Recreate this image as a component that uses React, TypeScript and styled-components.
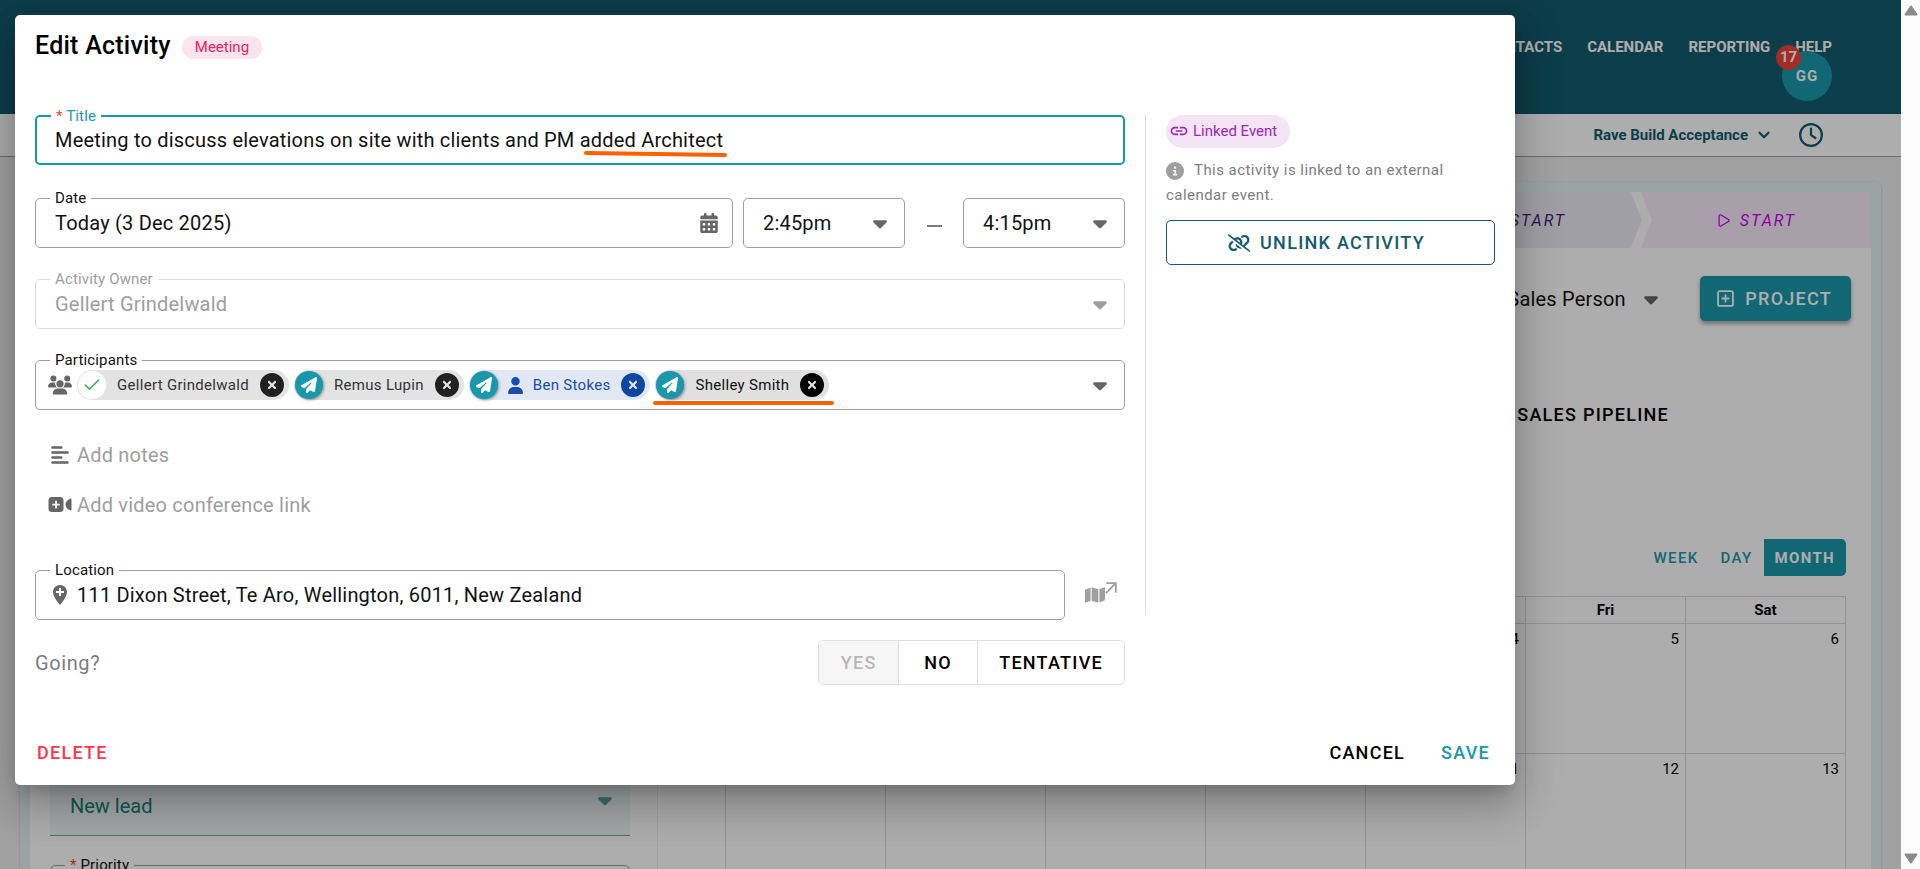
import React from "react";
import styled, { createGlobalStyle, css } from "styled-components";
import {
  FaAlignLeft,
  FaCalendarDays,
  FaCaretDown,
  FaCircleInfo,
  FaCircleXmark,
  FaLinkSlash,
  FaMap,
  FaPaperPlane,
  FaRegClock,
  FaRegSquarePlus,
  FaUser,
  FaUsers,
} from "react-icons/fa6";
import { MdAddLocation, MdArrowOutward, MdLink } from "react-icons/md";
import { Check, ChevronDown, Play } from "lucide-react";

const colour = {
  brand: "#135b6d",
  teal: "#1a98ab",
  ink: "#111111",
  icon: "#666666",
  muted: "#9e9e9e",
  outline: "#9e9e9e",
  faint: "#dddddd",
  marker: "#ff6100",
};

const GlobalStyle = createGlobalStyle`
  *, *::before, *::after { box-sizing: border-box; }
  body { margin: 0; overflow: hidden; font-family: Roboto, "Liberation Sans", sans-serif; }
  button, input, select { font: inherit; letter-spacing: inherit; color: inherit; }
  h1, h2, p { margin: 0; }
`;

/* ---------- shared parts ---------- */

const plainButton = css`
  display: inline-flex;
  align-items: center;
  justify-content: center;
  padding: 0;
  border: 0;
  background: none;
  cursor: pointer;
`;

const actionText = css`
  font-size: 18px;
  font-weight: 500;
  letter-spacing: 0.07em;
  white-space: nowrap;
`;

const IconButton = styled.button`
  ${plainButton}
  color: ${colour.icon};
`;

const Select = styled.select`
  flex: 1;
  min-width: 0;
  padding: 0;
  border: 0;
  outline: 0;
  background: none;
  appearance: none;
  opacity: 1;
`;

/* ---------- page frame ---------- */

const Frame = styled.div`
  display: flex;
  height: 100vh;
  overflow: hidden;
`;

const Viewport = styled.div`
  position: relative;
  flex: 1;
  min-width: 0;
  overflow: hidden;
  background: #eeeeee;
`;

const ScrollTrack = styled.div`
  display: flex;
  flex-direction: column;
  align-items: center;
  justify-content: space-between;
  width: 19px;
  padding: 5px 0;
  background: #fdfdfd;
`;

const TopBar = styled.header`
  display: flex;
  flex-direction: column;
  align-items: flex-end;
  height: 114px;
  padding: 38px 69px 0 20px;
  background: ${colour.brand};
`;

const Nav = styled.nav`
  display: flex;
  gap: 25px;
`;

const NavLink = styled.a`
  color: #ffffff;
  font-size: 15px;
  font-weight: 700;
  line-height: 18px;
  text-decoration: none;
`;

const Avatar = styled.button`
  ${plainButton}
  position: relative;
  width: 50px;
  height: 50px;
  margin-top: -5px;
  border-radius: 50%;
  background: ${colour.teal};
  color: #ffffff;
  font-size: 15px;
  font-weight: 700;
  letter-spacing: 1px;
`;

const Badge = styled.span`
  position: absolute;
  top: -6px;
  left: -6px;
  width: 25px;
  border-radius: 50%;
  background: #f04138;
  font-size: 15px;
  line-height: 25px;
  letter-spacing: 0;
`;

const SubBar = styled.div`
  display: flex;
  align-items: center;
  justify-content: flex-end;
  gap: 26px;
  height: 43px;
  padding: 0 78px 0 20px;
  border-bottom: 1px solid #a3a3a3;
  background: #ffffff;
  color: ${colour.brand};
`;

const CompanyButton = styled.button`
  ${plainButton}
  gap: 7px;
  font-size: 15px;
  font-weight: 700;
`;

const Panel = styled.main`
  margin: 25px 20px 0;
  border: 10px solid #e4f3f0;
  border-radius: 6px;
  background: #ffffff;
  box-shadow: 0 1px 3px rgba(0, 0, 0, 0.2);
`;

const Stages = styled.div`
  display: flex;
`;

const Stage = styled.button<{ $last?: boolean }>`
  ${plainButton}
  flex: 1 1 ${(p) => (p.$last ? 0 : 10)}px;
  gap: 9px;
  height: 56px;
  margin-right: ${(p) => (p.$last ? 0 : -10)}px;
  padding-right: ${(p) => (p.$last ? 0 : 10)}px;
  background: ${(p) => (p.$last ? "#faeafd" : "#ebeaf4")};
  color: ${(p) => (p.$last ? "#c800f0" : "#4b1a86")};
  font-size: 16px;
  font-style: italic;
  letter-spacing: 2px;
  clip-path: ${(p) =>
    p.$last
      ? "polygon(0 0, 100% 0, 100% 100%, 0 100%, 11px 50%)"
      : "polygon(0 0, calc(100% - 20px) 0, calc(100% - 9px) 50%, calc(100% - 20px) 100%, 0 100%, 11px 50%)"};
`;

const Columns = styled.div`
  display: flex;
  height: 700px;
`;

const LeadColumn = styled.section`
  flex: 0 1 628px;
  padding: 525px 27px 0 20px;
  border-right: 1px solid #eeeeee;
`;

const FilledSelect = styled.label`
  display: flex;
  align-items: center;
  height: 63px;
  margin-bottom: 29px;
  padding: 3px 14px 0 20px;
  border-bottom: 1px solid #5fa8a2;
  background: #f0f7f7;
  color: #12847c;
  font-size: 20px;
  svg {
    margin-bottom: 11px;
    opacity: 0.7;
  }
`;

const PlanColumn = styled.section`
  flex: 1;
  min-width: 0;
  padding-top: 28px;
`;

const PlanTools = styled.div`
  display: flex;
  align-items: center;
  justify-content: flex-end;
  gap: 38px;
  padding: 0 20px;
`;

const PersonSelect = styled.label`
  display: flex;
  align-items: center;
  gap: 14px;
  color: ${colour.ink};
  font-size: 20px;
  letter-spacing: 0.01em;
`;

const ProjectButton = styled.button`
  ${plainButton}
  ${actionText}
  gap: 10px;
  height: 45px;
  padding: 0 19px 0 16px;
  border-radius: 5px;
  background: ${colour.teal};
  color: #ffffff;
  box-shadow: 0 3px 4px rgba(0, 0, 0, 0.35);
`;

const PlanTitle = styled.h2`
  ${actionText}
  margin-top: 82px;
  padding-right: 202px;
  line-height: 24px;
  text-align: right;
`;

const ViewSwitch = styled.div`
  display: flex;
  justify-content: flex-end;
  margin: 112px 25px 20px 0;
`;

const ViewButton = styled.button<{ $on?: boolean }>`
  ${plainButton}
  height: 37px;
  padding: 0 11px;
  border-radius: 0 5px 5px 0;
  background: ${(p) => (p.$on ? colour.teal : "none")};
  color: ${(p) => (p.$on ? "#ffffff" : colour.teal)};
  font-size: 15px;
  font-weight: ${(p) => (p.$on ? 700 : 500)};
  letter-spacing: 0.09em;
`;

const CalendarWrap = styled.div`
  padding: 0 25px 0 67px;
`;

const Calendar = styled.table`
  width: 100%;
  table-layout: fixed;
  border-collapse: collapse;
  font-size: 15px;
  th,
  td {
    border: 1px solid #d9d9d9;
  }
  th {
    height: 27px;
    padding: 0;
    font-weight: 700;
  }
  td {
    height: 130px;
    padding: 6px 6px 0;
    line-height: 18px;
    text-align: right;
    vertical-align: top;
  }
`;

/* ---------- modal ---------- */

const Scrim = styled.div`
  position: absolute;
  inset: 0;
  padding: 15px;
  background: rgba(0, 0, 0, 0.32);
`;

const Modal = styled.div`
  display: flex;
  flex-direction: column;
  width: 100%;
  max-width: 1500px;
  border-radius: 5px;
  background: #ffffff;
  color: ${colour.ink};
  box-shadow: 0 11px 15px -7px rgba(0, 0, 0, 0.2), 0 24px 38px 3px rgba(0, 0, 0, 0.14),
    0 9px 46px 8px rgba(0, 0, 0, 0.12);
`;

const ModalHead = styled.div`
  display: flex;
  align-items: flex-end;
  gap: 11px;
  padding: 16px 20px 54px;
`;

const ModalTitle = styled.h1`
  color: #000000;
  font-size: 25px;
  font-weight: 500;
  line-height: 30px;
  letter-spacing: 0.01em;
`;

const TypeTag = styled.span`
  margin-bottom: 2px;
  padding: 0 13px;
  border-radius: 12px;
  background: #fce4ec;
  color: #e91e63;
  font-size: 15px;
  line-height: 23px;
`;

const ModalBody = styled.div`
  display: flex;
  padding: 0 20px;
`;

const Form = styled.form`
  flex: 1;
  min-width: 0;
  display: flex;
  flex-direction: column;
  gap: 31px;
`;

const Row = styled.div<{ $gap?: number }>`
  display: flex;
  align-items: center;
  gap: ${(p) => p.$gap ?? 0}px;
`;

const Field = styled.div<{ $tone?: "active" | "disabled"; $lead?: boolean; $width?: number }>`
  position: relative;
  display: flex;
  align-items: center;
  gap: 5px;
  flex: ${(p) => (p.$width ? `0 0 ${p.$width}px` : "1 0 auto")};
  min-width: 0;
  height: 50px;
  padding: 0 13px 0 ${(p) => (p.$lead ? 12 : p.$tone === "active" ? 18 : 19)}px;
  border: ${(p) => (p.$tone === "active" ? 2 : 1)}px solid
    ${(p) => (p.$tone === "active" ? colour.teal : p.$tone === "disabled" ? colour.faint : colour.outline)};
  border-radius: 5px;
  color: ${(p) => (p.$tone === "disabled" ? colour.muted : colour.ink)};
  font-size: 20px;
  letter-spacing: 0.01em;
`;

const FieldLabel = styled.label<{ $active?: boolean }>`
  position: absolute;
  top: -11px;
  left: 14px;
  padding: 0 5px;
  background: #ffffff;
  color: ${(p) => (p.$active ? colour.teal : "inherit")};
  font-size: 15px;
  line-height: 20px;
  letter-spacing: 0.01em;
`;

const Required = styled.span`
  color: #f44336;
`;

const TextInput = styled.input`
  flex: 1;
  width: 100%;
  min-width: 0;
  padding: 0;
  border: 0;
  outline: 0;
  background: none;
  &::placeholder {
    color: ${colour.muted};
    opacity: 1;
  }
`;

const IconSlot = styled.span`
  flex: none;
  display: flex;
  align-items: center;
  justify-content: center;
  width: 24px;
  color: ${colour.icon};
`;

const CaretSlot = styled.span<{ $dim?: boolean }>`
  display: flex;
  color: ${(p) => (p.$dim ? colour.muted : colour.icon)};
`;

const TimeRow = styled.div`
  display: flex;
  align-items: center;
  gap: 10px;
  padding-top: 2px;
`;

const TimeRange = styled.div`
  display: flex;
  align-items: center;
`;

const Dash = styled.span`
  flex: none;
  width: 15px;
  height: 2px;
  margin: 6px 21px 0 22px;
  background: #7d7d7d;
`;

const Extras = styled.div`
  display: flex;
  flex-direction: column;
  margin: -11px 0 9px;
`;

const ExtraRow = styled.label`
  display: flex;
  align-items: center;
  gap: 5px;
  height: 50px;
  padding-left: 13px;
  font-size: 20px;
  letter-spacing: 0.01em;
`;

type ChipTone = "normal" | "contact" | "strong";

const chipTones: Record<ChipTone, { bg: string; text: string; remove: string }> = {
  normal: { bg: "#e3e3e3", text: "#333333", remove: "#212121" },
  contact: { bg: "#e1e8f4", text: "#184da8", remove: "#0d47a1" },
  strong: { bg: "#e0e0e0", text: "#111111", remove: "#000000" },
};

const ChipBox = styled.span<{ $tone: ChipTone }>`
  flex: none;
  display: flex;
  align-items: center;
  gap: 11px;
  height: 30px;
  padding: 0 5px 0 1px;
  border-radius: 15px;
  background: ${(p) => chipTones[p.$tone].bg};
  color: ${(p) => chipTones[p.$tone].text};
  font-size: 15px;
  letter-spacing: 0.02em;
`;

const ChipFace = styled.span<{ $accepted?: boolean }>`
  display: flex;
  align-items: center;
  justify-content: center;
  width: 28px;
  height: 28px;
  border-radius: 50%;
  background: ${(p) => (p.$accepted ? "#ffffff" : colour.teal)};
  color: ${(p) => (p.$accepted ? "#4caf50" : "#ffffff")};
  box-shadow: ${(p) => (p.$accepted ? "none" : "1px 1px 3px rgba(0, 0, 0, 0.4)")};
`;

const ContactIcon = styled(FaUser)`
  margin: 0 -2px;
`;

const ChipRemove = styled.button<{ $tone: ChipTone }>`
  ${plainButton}
  width: 24px;
  height: 24px;
  border-radius: 50%;
  color: ${(p) => chipTones[p.$tone].remove};
`;

const MarkerAnchor = styled.span`
  position: relative;
  display: flex;
`;

const Marker = styled.svg<{ $left: number; $top: number }>`
  position: absolute;
  left: ${(p) => p.$left}px;
  top: ${(p) => p.$top}px;
  pointer-events: none;
`;

const MapButton = styled.button`
  ${plainButton}
  flex: none;
  align-items: flex-end;
  justify-content: flex-end;
  width: 60px;
  padding-right: 3px;
  color: ${colour.muted};
  svg:last-child {
    margin: -8px 0 7px -4px;
  }
`;

const Side = styled.aside`
  width: 350px;
  margin: 0 0 5px 20px;
  padding-left: 20px;
  border-left: 1px solid ${colour.faint};
`;

const LinkedTag = styled.span`
  display: inline-flex;
  align-items: center;
  gap: 4px;
  height: 33px;
  padding: 0 13px 2px 3px;
  border-radius: 17px;
  background: #f3e5f5;
  color: #9c27b0;
  font-size: 15px;
  vertical-align: top;
`;

const Hint = styled.p`
  margin: 10px 0 12px;
  color: #7d7d7d;
  font-size: 15px;
  line-height: 25px;
  letter-spacing: 0.03em;
  svg {
    margin-right: 10px;
    color: ${colour.muted};
    vertical-align: -5px;
  }
`;

const UnlinkButton = styled.button`
  ${plainButton}
  ${actionText}
  gap: 10px;
  width: 100%;
  height: 45px;
  padding-right: 8px;
  border: 1px solid ${colour.brand};
  border-radius: 5px;
  color: ${colour.brand};
`;

const GoingRow = styled.div`
  display: flex;
  align-items: center;
  justify-content: space-between;
  margin: 0 370px 45px 0;
  padding: 20px 20px 0;
  color: #7d7d7d;
  font-size: 20px;
  letter-spacing: 0.03em;
`;

const Segments = styled.div`
  display: flex;
  border: 1px solid #dfdfdf;
  border-radius: 5px;
  overflow: hidden;
`;

const Segment = styled.button`
  ${plainButton}
  ${actionText}
  min-width: 79px;
  height: 43px;
  padding: 0 21px;
  color: #000000;
  & + & {
    border-left: 1px solid #dfdfdf;
  }
  &:disabled {
    background: #f6f6f6;
    color: #b8b8b8;
  }
`;

const ModalFoot = styled.div`
  display: flex;
  justify-content: space-between;
  padding: 0 15px 10px 12px;
`;

const FootButton = styled.button<{ $tone?: "danger" | "primary" }>`
  ${plainButton}
  ${actionText}
  height: 45px;
  padding: 0 10px;
  color: ${(p) => (p.$tone === "danger" ? "#f9374f" : p.$tone === "primary" ? colour.teal : "#000000")};
`;

/* ---------- drawings ---------- */

const VideoPlusIcon = () => (
  <svg width="24" height="18" viewBox="0 0 24 18" fill="currentColor" aria-hidden="true">
    <path
      fillRule="evenodd"
      d="M4 1h8a3.500 3.500 0 0 1 3.500 3.500v8a3.500 3.500 0 0 1-3.500 3.500H4a3.500 3.500 0 0 1-3.500-3.500v-8A3.500 3.500 0 0 1 4 1zM7.200 4.800v3H4.300v1.700h2.900v3h1.700v-3h2.900V7.800H8.900v-3z"
    />
    <path d="M23.500 3.600v9.800c0 1-.8 1.400-1.600.9-2.700-1.600-4.400-3-4.400-5.800s1.700-4.200 4.400-5.800c.8-.5 1.600-.1 1.600.9z" />
  </svg>
);

const ScrollArrow = ({ down }: { down?: boolean }) => (
  <svg width="14" height="11" viewBox="0 0 14 11" aria-hidden="true">
    <path
      d={down ? "M1.500 1.500h11L7 9.500z" : "M1.500 9.500h11L7 1.500z"}
      fill="#8b8b8b"
      stroke="#8b8b8b"
      strokeWidth="2"
      strokeLinejoin="round"
    />
  </svg>
);

/* ---------- composed parts ---------- */

const Caret = ({ dim }: { dim?: boolean }) => (
  <CaretSlot $dim={dim}>
    <FaCaretDown size={22} />
  </CaretSlot>
);

interface ChipProps {
  name: string;
  tone?: ChipTone;
  accepted?: boolean;
}

const Chip = ({ name, tone = "normal", accepted }: ChipProps) => (
  <ChipBox $tone={tone}>
    <ChipFace $accepted={accepted}>{accepted ? <Check size={20} /> : <FaPaperPlane size={16} />}</ChipFace>
    {tone === "contact" && <ContactIcon size={17} />}
    {name}
    <ChipRemove type="button" $tone={tone} aria-label={`Remove ${name}`}>
      <FaCircleXmark size={24} />
    </ChipRemove>
  </ChipBox>
);

const days = ["Sun", "Mon", "Tue", "Wed", "Thu", "Fri", "Sat"];
const weeks = [
  [30, 1, 2, 3, 4, 5, 6],
  [7, 8, 9, 10, 11, 12, 13],
];
const stages = [1, 2, 3, 4, 5, 6, 7, 8];

const Dashboard = () => (
  <>
    <TopBar>
      <Nav>
        {["CONTACTS", "CALENDAR", "REPORTING", "HELP"].map((item) => (
          <NavLink key={item} href="#">
            {item}
          </NavLink>
        ))}
      </Nav>
      <Avatar type="button">
        GG<Badge>17</Badge>
      </Avatar>
    </TopBar>
    <SubBar>
      <CompanyButton type="button">
        Rave Build Acceptance
        <ChevronDown size={18} strokeWidth={3} />
      </CompanyButton>
      <IconButton type="button" aria-label="Timesheet">
        <FaRegClock size={24} color={colour.brand} />
      </IconButton>
    </SubBar>
    <Panel>
      <Stages>
        {stages.map((n) => (
          <Stage key={n} type="button" $last={n === stages.length}>
            <Play size={15} />
            START
          </Stage>
        ))}
      </Stages>
      <Columns>
        <LeadColumn>
          <FilledSelect>
            <Select aria-label="Lead status">
              <option>New lead</option>
            </Select>
            <FaCaretDown size={22} />
          </FilledSelect>
          <Field>
            <FieldLabel htmlFor="priority">
              <Required>*</Required> Priority
            </FieldLabel>
            <Select id="priority" />
          </Field>
        </LeadColumn>
        <PlanColumn>
          <PlanTools>
            <PersonSelect>
              <Select aria-label="Sales person">
                <option>Sales Person</option>
              </Select>
              <Caret />
            </PersonSelect>
            <ProjectButton type="button">
              <FaRegSquarePlus size={19} />
              PROJECT
            </ProjectButton>
          </PlanTools>
          <PlanTitle>SALES PIPELINE</PlanTitle>
          <ViewSwitch>
            <ViewButton type="button">WEEK</ViewButton>
            <ViewButton type="button">DAY</ViewButton>
            <ViewButton type="button" $on>
              MONTH
            </ViewButton>
          </ViewSwitch>
          <CalendarWrap>
            <Calendar>
              <thead>
                <tr>
                  {days.map((d) => (
                    <th key={d}>{d}</th>
                  ))}
                </tr>
              </thead>
              <tbody>
                {weeks.map((week) => (
                  <tr key={week[0]}>
                    {week.map((d) => (
                      <td key={d}>{d}</td>
                    ))}
                  </tr>
                ))}
              </tbody>
            </Calendar>
          </CalendarWrap>
        </PlanColumn>
      </Columns>
    </Panel>
  </>
);

const EditActivity = () => (
  <Modal role="dialog" aria-modal="true" aria-labelledby="edit-activity">
    <ModalHead>
      <ModalTitle id="edit-activity">Edit Activity</ModalTitle>
      <TypeTag>Meeting</TypeTag>
    </ModalHead>
    <ModalBody>
      <Form>
        <Field $tone="active">
          <FieldLabel htmlFor="title" $active>
            <Required>*</Required> Title
          </FieldLabel>
          <TextInput
            id="title"
            defaultValue="Meeting to discuss elevations on site with clients and PM added Architect"
          />
          <Marker $left={546} $top={33} width="146" height="8" viewBox="0 0 146 8">
            <path d="M3 3L142 5" stroke={colour.marker} strokeWidth="4" strokeLinecap="round" />
          </Marker>
        </Field>
        <TimeRow>
          <Field>
            <FieldLabel htmlFor="date">Date</FieldLabel>
            <TextInput id="date" defaultValue="Today (3 Dec 2025)" />
            <IconButton type="button" aria-label="Choose date">
              <FaCalendarDays size={20} />
            </IconButton>
          </Field>
          <TimeRange>
            <Field $width={162}>
              <Select aria-label="Start time">
                <option>2:45pm</option>
              </Select>
              <Caret />
            </Field>
            <Dash aria-hidden="true" />
            <Field $width={162}>
              <Select aria-label="End time">
                <option>4:15pm</option>
              </Select>
              <Caret />
            </Field>
          </TimeRange>
        </TimeRow>
        <Field $tone="disabled">
          <FieldLabel htmlFor="owner">Activity Owner</FieldLabel>
          <Select id="owner" disabled>
            <option>Gellert Grindelwald</option>
          </Select>
          <Caret dim />
        </Field>
        <Field $lead>
          <FieldLabel htmlFor="participants">Participants</FieldLabel>
          <IconSlot>
            <FaUsers size={24} />
          </IconSlot>
          <Chip name="Gellert Grindelwald" accepted />
          <Chip name="Remus Lupin" />
          <Chip name="Ben Stokes" tone="contact" />
          <MarkerAnchor>
            <Chip name="Shelley Smith" tone="strong" />
            <Marker $left={-3} $top={29} width="184" height="8" viewBox="0 0 184 8">
              <path d="M3 4H180" stroke={colour.marker} strokeWidth="4" strokeLinecap="round" />
            </Marker>
          </MarkerAnchor>
          <TextInput id="participants" />
          <Caret />
        </Field>
        <Extras>
          <ExtraRow>
            <IconSlot>
              <FaAlignLeft size={20} />
            </IconSlot>
            <TextInput aria-label="Notes" placeholder="Add notes" />
          </ExtraRow>
          <ExtraRow>
            <IconSlot>
              <VideoPlusIcon />
            </IconSlot>
            <TextInput aria-label="Video conference link" placeholder="Add video conference link" />
          </ExtraRow>
        </Extras>
        <Row>
          <Field $lead>
            <FieldLabel htmlFor="location">Location</FieldLabel>
            <IconSlot>
              <MdAddLocation size={24} />
            </IconSlot>
            <TextInput id="location" defaultValue="111 Dixon Street, Te Aro, Wellington, 6011, New Zealand" />
          </Field>
          <MapButton type="button" aria-label="Open map">
            <FaMap size={20} />
            <MdArrowOutward size={21} />
          </MapButton>
        </Row>
      </Form>
      <Side>
        <LinkedTag>
          <MdLink size={20} />
          Linked Event
        </LinkedTag>
        <Hint>
          <FaCircleInfo size={18} />
          This activity is linked to an external calendar event.
        </Hint>
        <UnlinkButton type="button">
          <FaLinkSlash size={22} />
          UNLINK ACTIVITY
        </UnlinkButton>
      </Side>
    </ModalBody>
    <GoingRow>
      Going?
      <Segments>
        <Segment type="button" disabled>
          YES
        </Segment>
        <Segment type="button">NO</Segment>
        <Segment type="button">TENTATIVE</Segment>
      </Segments>
    </GoingRow>
    <ModalFoot>
      <FootButton type="button" $tone="danger">
        DELETE
      </FootButton>
      <Row $gap={16}>
        <FootButton type="button">CANCEL</FootButton>
        <FootButton type="button" $tone="primary">
          SAVE
        </FootButton>
      </Row>
    </ModalFoot>
  </Modal>
);

export default function App() {
  return (
    <>
      <GlobalStyle />
      <Frame>
        <Viewport>
          <Dashboard />
          <Scrim>
            <EditActivity />
          </Scrim>
        </Viewport>
        <ScrollTrack aria-hidden="true">
          <ScrollArrow />
          <ScrollArrow down />
        </ScrollTrack>
      </Frame>
    </>
  );
}
